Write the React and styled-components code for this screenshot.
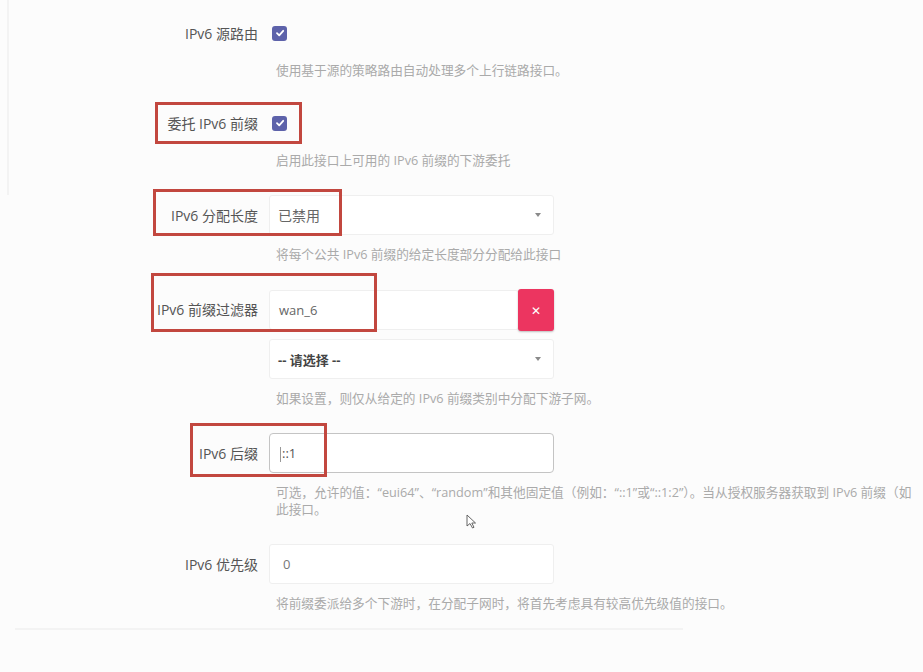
import React from "react";
import styled, { createGlobalStyle } from "styled-components";

const Global = createGlobalStyle`
  html, body { margin: 0; padding: 0; background: #fcfcfc; overflow: hidden; }
  body { font-family: "Open Sans", "Noto Sans CJK SC", sans-serif; }
`;

const Page = styled.div`
  position: relative;
  width: 923px;
  height: 672px;
  overflow: hidden;
  background: #fcfcfc;
`;

const SideLine = styled.div`
  position: absolute;
  left: 7px;
  top: 0;
  width: 2px;
  height: 195px;
  background: #f3f3f3;
`;

const Form = styled.div`
  display: flex;
  flex-direction: column;
  gap: 26px;
  padding-top: 15px;
  padding-bottom: 16px;
  margin: 0 240px 0 15px;
  border-bottom: 2px solid #f3f3f3;
`;

const Field = styled.div`
  display: grid;
  grid-template-columns: 243px 1fr;
  column-gap: 11px;
  align-items: start;
`;

const Label = styled.div`
  height: ${(p) => p.$h}px;
  display: flex;
  align-items: center;
  justify-content: flex-end;
  font-size: 14px;
  color: #555;
  white-space: nowrap;
`;

const Controls = styled.div`
  display: flex;
  flex-direction: column;
  gap: 8px;
`;

const CheckRow = styled.div`
  height: 36px;
  display: flex;
  align-items: center;
  padding-left: 3px;
`;

const Check = styled.span`
  width: 15px;
  height: 15px;
  border-radius: 3px;
  background: #5d62aa;
  display: inline-flex;
  align-items: center;
  justify-content: center;
`;

const Box = styled.div`
  box-sizing: border-box;
  width: ${(p) => p.$w || 285}px;
  height: 40px;
  background: #fff;
  border: ${(p) => (p.$focus ? "1.5px solid #c4c4c4" : "1px solid #efefef")};
  border-radius: ${(p) => (p.$focus ? 4 : 3)}px;
  display: flex;
  align-items: center;
  justify-content: space-between;
  padding: 0 12px 0 ${(p) => p.$pl || 8}px;
  font-size: ${(p) => p.$fs || 13}px;
  color: ${(p) => p.$color || "#666"};
  font-weight: ${(p) => (p.$bold ? 700 : 400)};
`;

const Arrow = styled.span`
  width: 0;
  height: 0;
  border-left: 3px solid transparent;
  border-right: 3px solid transparent;
  border-top: 4px solid #8a8a8a;
`;

const InputGroup = styled.div`
  display: flex;
  align-items: center;
`;

const RemoveBtn = styled.div`
  width: 36px;
  height: 42px;
  margin-left: -1px;
  border-radius: 3px;
  background: #ec3560;
  box-shadow: 0 1px 2px rgba(0, 0, 0, 0.25);
  color: #fff;
  font-size: 12px;
  display: flex;
  align-items: center;
  justify-content: center;
`;

const Desc = styled.div`
  grid-column: 2;
  margin-top: 11px;
  padding-left: 7px;
  font-size: 12.7px;
  line-height: 17px;
  color: #aaa;
  white-space: nowrap;
`;

const Caret = styled.span`
  display: inline-block;
  width: 1px;
  height: 15px;
  background: #999;
  margin-right: 1px;
  vertical-align: middle;
`;

const Mark = styled.div`
  position: absolute;
  box-sizing: border-box;
  left: ${(p) => p.$x}px;
  top: ${(p) => p.$y}px;
  width: ${(p) => p.$w}px;
  height: ${(p) => p.$h}px;
  border: 3px solid #c2473f;
`;

const Pointer = styled.svg`
  position: absolute;
  left: 466px;
  top: 514px;
`;

const CheckIcon = () => (
  <svg width="10" height="10" viewBox="0 0 10 10">
    <path d="M2 5.2 L4.2 7.3 L8.2 2.8" fill="none" stroke="#fff" strokeWidth="1.8" strokeLinecap="round" strokeLinejoin="round" />
  </svg>
);

export default function App() {
  return (
    <Page>
      <Global />
      <SideLine />
      <Form>
        <Field>
          <Label $h={36}>IPv6 源路由</Label>
          <CheckRow><Check><CheckIcon /></Check></CheckRow>
          <Desc>使用基于源的策略路由自动处理多个上行链路接口。</Desc>
        </Field>
        <Field>
          <Label $h={36}>委托 IPv6 前缀</Label>
          <CheckRow><Check><CheckIcon /></Check></CheckRow>
          <Desc>启用此接口上可用的 IPv6 前缀的下游委托</Desc>
        </Field>
        <Field>
          <Label $h={40}>IPv6 分配长度</Label>
          <Box $color="#666" $fs={14}>已禁用<Arrow /></Box>
          <Desc>将每个公共 IPv6 前缀的给定长度部分分配给此接口</Desc>
        </Field>
        <Field>
          <Label $h={40}>IPv6 前缀过滤器</Label>
          <Controls>
            <InputGroup>
              <Box $w={250} $pl={9}>wan_6</Box>
              <RemoveBtn>✕</RemoveBtn>
            </InputGroup>
            <Box $bold $color="#444">-- 请选择 --<Arrow /></Box>
          </Controls>
          <Desc>如果设置，则仅从给定的 IPv6 前缀类别中分配下游子网。</Desc>
        </Field>
        <Field>
          <Label $h={40}>IPv6 后缀</Label>
          <Box $focus $pl={10} $color="#555"><span><Caret />::1</span></Box>
          <Desc>
            可选，允许的值：“eui64”、“random”和其他固定值（例如：“::1”或“::1:2”）。当从授权服务器获取到 IPv6 前缀（如
            <br />
            此接口。
          </Desc>
        </Field>
        <Field>
          <Label $h={40}>IPv6 优先级</Label>
          <Box $pl={13} $color="#777">0</Box>
          <Desc>将前缀委派给多个下游时，在分配子网时，将首先考虑具有较高优先级值的接口。</Desc>
        </Field>
      </Form>
      <Mark $x={155} $y={102} $w={147} $h={42} />
      <Mark $x={153} $y={189} $w={189} $h={47} />
      <Mark $x={151} $y={273} $w={226} $h={59} />
      <Mark $x={190} $y={423} $w={137} $h={54} />
      <Pointer width="12" height="16" viewBox="0 0 12 16">
        <path d="M1 1 L1 12 L4 9.5 L6.5 14 L8 13.3 L5.8 9 L9.5 9 Z" fill="#fff" stroke="#555" strokeWidth="0.9" strokeLinejoin="round" />
      </Pointer>
    </Page>
  );
}
